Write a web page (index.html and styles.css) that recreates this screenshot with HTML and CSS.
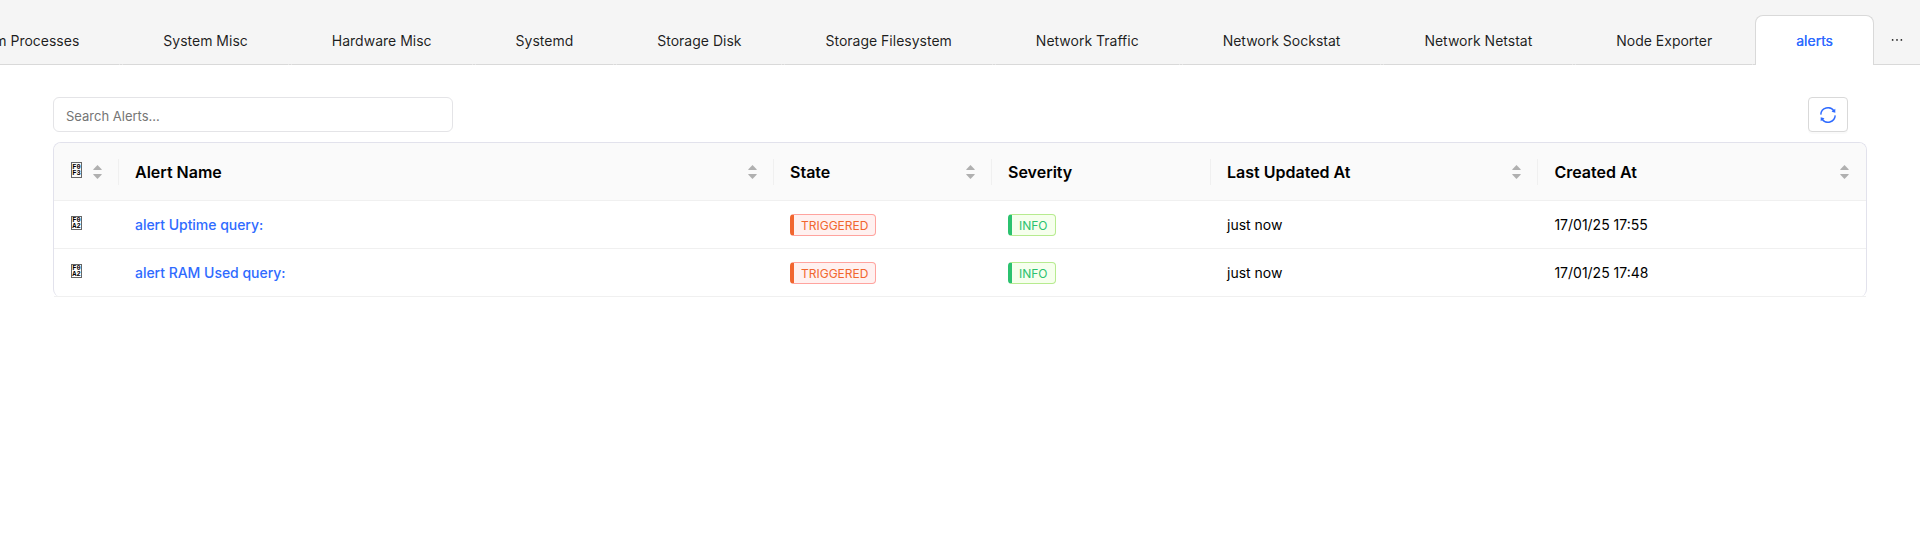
FILE: index.html
```html
<!DOCTYPE html>
<html lang="en">
<head>
<meta charset="utf-8">
<title>Alerts</title>
<link rel="stylesheet" href="styles.css">
</head>
<body>
<svg class="defs" aria-hidden="true">
  <symbol id="sort" viewBox="0 0 9 14">
    <path d="M4.500 0 8.600 4.300Q9 5 8.400 5H.6Q0 5 .4 4.300Z"/>
    <path d="M4.500 14 8.600 9.700Q9 9 8.400 9H.6Q0 9 .4 9.700Z"/>
  </symbol>
</svg>
<nav class="tabs">
  <div class="tab-list">
    <div class="tab">System Processes</div>
    <div class="tab">System Misc</div>
    <div class="tab">Hardware Misc</div>
    <div class="tab">Systemd</div>
    <div class="tab">Storage Disk</div>
    <div class="tab">Storage Filesystem</div>
    <div class="tab">Network Traffic</div>
    <div class="tab">Network Sockstat</div>
    <div class="tab">Network Netstat</div>
    <div class="tab">Node Exporter</div>
    <div class="tab active">alerts</div>
  </div>
  <button class="more" aria-label="More tabs"><svg width="16" height="16" viewBox="0 0 1024 1024"><path d="M176 511a56 56 0 10112 0 56 56 0 10-112 0zm280 0a56 56 0 10112 0 56 56 0 10-112 0zm280 0a56 56 0 10112 0 56 56 0 10-112 0z"/></svg></button>
</nav>
<main class="content">
  <div class="toolbar">
    <input class="search" type="text" placeholder="Search Alerts...">
    <button class="refresh" aria-label="Refresh"><svg width="16" height="16" viewBox="0 0 16 16"><path class="arc" d="M.8 7.600A7.200 7.200 0 0 1 14 4M15.200 8.400A7.200 7.200 0 0 1 2 12"/><path class="head" d="M15.300 1.800V5.700L11.500 4.800ZM.7 14.200V10.300L4.500 11.200Z"/></svg></button>
  </div>
  <div class="table-box">
    <table class="table">
      <colgroup><col class="c-icon"><col class="c-name"><col class="c-state"><col class="c-severity"><col class="c-updated"><col class="c-created"></colgroup>
      <thead>
        <tr>
          <th><div class="head-cell"><span class="glyph tall"><span>F0</span><span>F3</span></span><svg class="sort"><use href="#sort"/></svg></div></th>
          <th><div class="head-cell"><span>Alert Name</span><svg class="sort"><use href="#sort"/></svg></div></th>
          <th><div class="head-cell"><span>State</span><svg class="sort"><use href="#sort"/></svg></div></th>
          <th><div class="head-cell"><span>Severity</span></div></th>
          <th><div class="head-cell"><span>Last Updated At</span><svg class="sort"><use href="#sort"/></svg></div></th>
          <th><div class="head-cell"><span>Created At</span><svg class="sort"><use href="#sort"/></svg></div></th>
        </tr>
      </thead>
      <tbody>
        <tr>
          <td><span class="glyph"><span>F0</span><span>A2</span></span></td>
          <td><a class="link">alert Uptime query:</a></td>
          <td><span class="tag triggered">TRIGGERED</span></td>
          <td><span class="tag info">INFO</span></td>
          <td>just now</td>
          <td>17/01/25 17:55</td>
        </tr>
        <tr>
          <td><span class="glyph"><span>F0</span><span>A2</span></span></td>
          <td><a class="link">alert RAM Used query:</a></td>
          <td><span class="tag triggered">TRIGGERED</span></td>
          <td><span class="tag info">INFO</span></td>
          <td>just now</td>
          <td>17/01/25 17:48</td>
        </tr>
      </tbody>
    </table>
  </div>
</main>
</body>
</html>
```
FILE: styles.css
```css
* { box-sizing: border-box; }
body {
  margin: 0;
  background: #fff;
  color: #000;
  font: 14px/22px Inter, sans-serif;
  overflow: hidden;
}
.defs { display: none; }
button { font: inherit; padding: 0; cursor: pointer; }

.tabs {
  display: flex;
  align-items: stretch;
  height: 65px;
  padding-top: 15px;
  background: #f5f5f5;
  box-shadow: inset 0 -1px #d9d9d9;
}
.tab-list {
  display: flex;
  flex: 1;
  min-width: 0;
  justify-content: flex-end;
  gap: 2px;
}
.tab {
  flex: none;
  padding: 14px 40px 12px;
  border: 1px solid rgba(245, 245, 245, 0.5);
  border-bottom: 0;
  border-radius: 8px 8px 0 0;
  line-height: 22px;
  white-space: nowrap;
  color: rgba(0, 0, 0, 0.88);
}
.tab.active {
  background: #fff;
  border-color: #d9d9d9;
  color: #2f6bff;
  text-shadow: 0 0 0.25px currentColor;
}
.more {
  flex: none;
  width: 46px;
  border: 0;
  background: none;
}
.more svg { display: block; margin: 0 auto; fill: #222; }

.content { padding: 32px 53px 0; }
.toolbar {
  display: flex;
  justify-content: space-between;
  padding-right: 19px;
  margin-bottom: 10px;
}
.search {
  width: 400px;
  height: 35px;
  padding: 2px 12px 0;
  border: 1px solid #e4e4e7;
  border-radius: 6px;
  font: 13px Inter, sans-serif;
}
.search::placeholder { color: #757575; }
.refresh {
  display: grid;
  place-items: center;
  width: 40px;
  height: 35px;
  border: 1px solid #d9d9d9;
  border-radius: 4px;
  background: #fff;
  box-shadow: 0 2px 0 rgba(0, 0, 0, 0.02);
}
.refresh .arc { fill: none; stroke: #2f6bff; stroke-width: 1.4; }
.refresh .head { fill: #2f6bff; }

.table-box {
  border: 1px solid #e2e2ec;
  border-bottom: 0;
  border-radius: 8px;
}
.table {
  width: 100%;
  table-layout: fixed;
  border-collapse: separate;
  border-spacing: 0;
}
.c-icon { width: 65px; }
.c-name { width: 655px; }
.c-state { width: 218px; }
.c-severity { width: 219px; }
.c-updated { width: 327.4px; }
.c-created { width: 327.6px; }
th {
  position: relative;
  height: 58px;
  padding: 0 16px;
  background: #fafafa;
  border-bottom: 1px solid #f0f0f0;
  font-size: 16px;
  font-weight: 600;
  text-align: left;
}
th:first-child { border-top-left-radius: 7px; }
th:last-child { border-top-right-radius: 7px; }
th:not(:last-child)::after {
  content: "";
  position: absolute;
  top: 16px;
  right: 0;
  width: 1px;
  height: 26px;
  background: #f0f0f0;
}
.head-cell {
  display: flex;
  align-items: center;
  justify-content: space-between;
  height: 24px;
  padding-top: 1px;
}
.sort { width: 9px; height: 14px; margin: 0 1.5px 1px 0; fill: #b0b0b0; }
td {
  height: 48px;
  padding: 0 16px;
  border-bottom: 1px solid #f0f0f0;
}
/* Codepoint box shown in place of the bell icon */
.glyph {
  display: flex;
  flex-direction: column;
  align-items: center;
  justify-content: center;
  width: 11px;
  height: 14px;
  margin: 0 0 3px 1px;
  border: 1px solid #666;
  font: 700 7px/6px "Liberation Mono", monospace;
}
.glyph.tall { height: 16px; margin-bottom: 5px; }
.link { color: #2f6bff; font-weight: 500; letter-spacing: -0.03px; }
.tag {
  display: inline-block;
  padding: 1px 0 0 7px;
  border: 1px solid;
  border-left-width: 4px;
  border-radius: 4px;
  font-size: 12px;
  line-height: 19px;
}
.triggered { width: 86px; color: #f1662f; background: #fff1f0; border-color: #ffa39e; border-left-color: #f1662f; }
.info { width: 48px; color: #2bc26f; background: #f6ffed; border-color: #b7eb8f; border-left-color: #2bc26f; }
```
